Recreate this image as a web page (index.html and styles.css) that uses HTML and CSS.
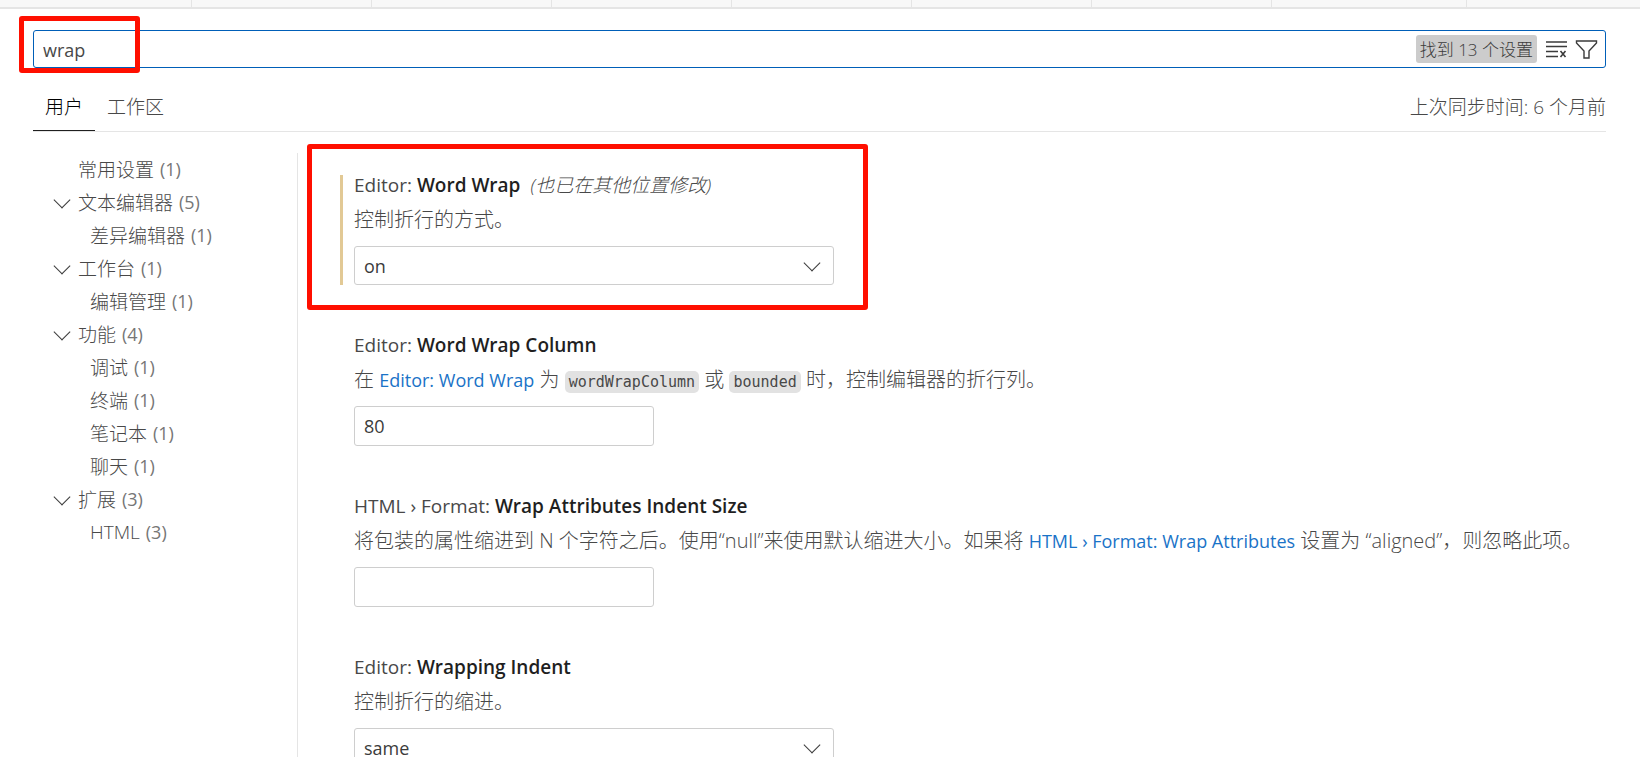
FILE: index.html
```html
<!DOCTYPE html>
<html lang="zh-CN">
<head>
    <meta charset="UTF-8">
    <meta name="viewport" content="width=device-width, initial-scale=1.0">
    <title>设置</title>
    <link rel="stylesheet" href="styles.css">
</head>
<body>
    <!-- Bottom edge of the editor tabs -->
    <div class="tab-strip">
        <span class="tab first"></span>
        <span class="tab"></span>
        <span class="tab"></span>
        <span class="tab"></span>
        <span class="tab"></span>
        <span class="tab"></span>
        <span class="tab"></span>
        <span class="tab wide"></span>
    </div>

    <div class="settings">
        <!-- Search box -->
        <div class="search-box">
            <input type="text" class="search-input" value="wrap" aria-label="搜索设置">
            <span class="count-badge">找到 13 个设置</span>
            <button class="icon-btn" aria-label="清除">
                <svg width="24" height="24" viewBox="0 0 24 24" fill="none" stroke="#3b3b3b">
                    <path d="M2 5h21M2 9.500h21M2 14.500h12M2 19.500h12" stroke-width="1.4"/>
                    <path d="M16.500 14l5 6M21.500 14l-5 6" stroke-width="1.6"/>
                </svg>
            </button>
            <button class="icon-btn" aria-label="筛选">
                <svg width="24" height="24" viewBox="0 0 24 24" fill="none" stroke="#3b3b3b" stroke-width="1.4">
                    <path d="M2.500 4h20v2l-7.500 8v7h-5v-7L2.500 6z"/>
                </svg>
            </button>
            <div class="mark mark-search"></div>
        </div>

        <!-- User / workspace tabs -->
        <div class="scope-bar">
            <button class="scope active">用户</button>
            <button class="scope">工作区</button>
            <span class="sync-time">上次同步时间: 6 个月前</span>
        </div>

        <div class="settings-body">
            <!-- Table of contents -->
            <ul class="toc">
                <li><span class="arrow"></span>常用设置 <span class="count">(1)</span></li>
                <li><span class="arrow open"></span>文本编辑器 <span class="count">(5)</span></li>
                <li class="child">差异编辑器 <span class="count">(1)</span></li>
                <li><span class="arrow open"></span>工作台 <span class="count">(1)</span></li>
                <li class="child">编辑管理 <span class="count">(1)</span></li>
                <li><span class="arrow open"></span>功能 <span class="count">(4)</span></li>
                <li class="child">调试 <span class="count">(1)</span></li>
                <li class="child">终端 <span class="count">(1)</span></li>
                <li class="child">笔记本 <span class="count">(1)</span></li>
                <li class="child">聊天 <span class="count">(1)</span></li>
                <li><span class="arrow open"></span>扩展 <span class="count">(3)</span></li>
                <li class="child">HTML <span class="count">(3)</span></li>
            </ul>

            <!-- Settings list -->
            <div class="setting-list">
                <div class="setting">
                    <div class="setting-inner modified">
                        <div class="title"><label for="wordWrap">Editor: <b>Word Wrap</b></label><i class="note">(也已在其他位置修改)</i></div>
                        <p class="desc">控制折行的方式。</p>
                        <div class="select-wrap">
                            <select id="wordWrap">
                                <option>off</option>
                                <option selected>on</option>
                                <option>wordWrapColumn</option>
                                <option>bounded</option>
                            </select>
                        </div>
                    </div>
                    <div class="mark mark-setting"></div>
                </div>

                <div class="setting">
                    <div class="setting-inner">
                        <div class="title"><label for="wrapColumn">Editor: <b>Word Wrap Column</b></label></div>
                        <p class="desc">在 <a href="#wordWrap">Editor: Word Wrap</a> 为 <code>wordWrapColumn</code> 或 <code>bounded</code> 时，控制编辑器的折行列。</p>
                        <input type="text" class="text-input" id="wrapColumn" value="80">
                    </div>
                </div>

                <div class="setting">
                    <div class="setting-inner">
                        <div class="title"><label for="indentSize">HTML › Format: <b>Wrap Attributes Indent Size</b></label></div>
                        <p class="desc">将包装的属性缩进到 N 个字符之后。使用“null”来使用默认缩进大小。如果将 <a href="#wrapAttributes">HTML › Format: Wrap Attributes</a> 设置为 “aligned”，则忽略此项。</p>
                        <input type="text" class="text-input" id="indentSize">
                    </div>
                </div>

                <div class="setting">
                    <div class="setting-inner">
                        <div class="title"><label for="wrapIndent">Editor: <b>Wrapping Indent</b></label></div>
                        <p class="desc">控制折行的缩进。</p>
                        <div class="select-wrap">
                            <select id="wrapIndent">
                                <option>none</option>
                                <option selected>same</option>
                                <option>indent</option>
                                <option>deepIndent</option>
                            </select>
                        </div>
                    </div>
                </div>
            </div>
        </div>
    </div>
</body>
</html>
```

FILE: styles.css
```css
* {
    margin: 0;
    padding: 0;
    box-sizing: border-box;
}

body {
    display: flex;
    flex-direction: column;
    height: 100vh;
    overflow: hidden;
    background-color: #fff;
    color: #484848;
    font-family: "Open Sans", "Noto Sans CJK SC", sans-serif;
    font-size: 19px;
    font-weight: 300;
}

button, input, select {
    font: inherit;
    color: inherit;
    background: none;
    border: none;
    outline: none;
}

/* Editor tabs */
.tab-strip {
    display: flex;
    flex-shrink: 0;
    height: 9px;
    background-color: #f8f8f8;
    border-bottom: 2px solid #e5e5e5;
}

.tab {
    width: 180px;
    border-right: 1px solid #e5e5e5;
}

.tab.first {
    width: 192px;
}

.tab.wide {
    width: 195px;
}

.settings {
    display: flex;
    flex-direction: column;
    flex: 1;
    min-height: 0;
    padding: 21px 34px 0 33px;
}

/* Search */
.search-box {
    position: relative;
    display: flex;
    flex-shrink: 0;
    align-items: center;
    height: 38px;
    padding-right: 7px;
    border: 1px solid #005fb8;
    border-radius: 3px;
}

.search-input {
    flex: 1;
    min-width: 0;
    height: 36px;
    padding: 2px 9px 0;
    font-size: 18px;
    font-weight: 400;
}

.count-badge {
    height: 28px;
    margin-right: 7px;
    padding: 0 4px;
    background-color: #ccc;
    border-radius: 3px;
    color: #3b3b3b;
    font-size: 17px;
    line-height: 29px;
}

.icon-btn {
    display: flex;
    width: 24px;
    height: 24px;
    margin-left: 6px;
    cursor: pointer;
}

.count-badge + .icon-btn {
    margin-left: 0;
}

/* Scope tabs */
.scope-bar {
    display: flex;
    flex-shrink: 0;
    align-items: flex-end;
    height: 64px;
    border-bottom: 1px solid #e5e5e5;
}

.scope {
    height: 47px;
    padding: 0 12px 2px;
    border-bottom: 1px solid transparent;
    cursor: pointer;
}

.scope.active {
    color: #000;
    border-bottom-color: #1f1f1f;
}

.sync-time {
    margin-left: auto;
    line-height: 47px;
}

/* Body */
.settings-body {
    display: flex;
    flex: 1;
    min-height: 0;
    padding-top: 21px;
}

.toc {
    flex-shrink: 0;
    width: 265px;
    border-right: 1px solid #e5e5e5;
    list-style: none;
}

.toc li {
    display: flex;
    align-items: center;
    gap: 6px;
    height: 33px;
    padding: 0 0 2px 16px;
}

.toc .child {
    padding-left: 57px;
}

.toc .count {
    color: #767676;
    font-size: 18px;
    font-weight: 400;
}

.arrow {
    width: 23px;
    height: 16px;
}

.arrow.open::before,
.select-wrap::after {
    content: "";
    display: block;
    width: 11px;
    height: 11px;
    border-right: 1px solid #3b3b3b;
    border-bottom: 1px solid #3b3b3b;
    transform: rotate(45deg);
}

.arrow.open::before {
    margin-left: 7px;
}

.setting-list {
    flex: 1;
    min-width: 0;
    padding-left: 42px;
}

.setting {
    position: relative;
    padding: 22px 0 28px;
}

.setting-inner {
    padding-left: 11px;
    border-left: 3px solid transparent;
}

.setting-inner.modified {
    border-left-color: #e2c995;
}

.title {
    height: 21px;
    font-weight: 500;
    line-height: 21px;
}

.title b {
    color: #1f1f1f;
    font-weight: 600;
}

.title .note {
    margin-left: 10px;
    font-weight: 300;
}

.desc {
    height: 28px;
    margin: 10px 0 12px;
    font-size: 20px;
    line-height: 28px;
    white-space: nowrap;
}

.desc a {
    color: #1a73c7;
    font-size: 18px;
    font-weight: 400;
    text-decoration: none;
}

code {
    padding: 2px 4px;
    background-color: #e2e2e2;
    border-radius: 5px;
    font-family: "DejaVu Sans Mono", monospace;
    font-size: 15px;
}

.text-input,
.select-wrap select {
    display: block;
    height: 40px;
    padding: 0 9px;
    border: 1px solid #cecece;
    border-radius: 3px;
    color: #3b3b3b;
    font-size: 18px;
    font-weight: 400;
}

.text-input {
    width: 300px;
}

.select-wrap {
    position: relative;
    width: 480px;
}

.select-wrap select {
    width: 100%;
    height: 39px;
    appearance: none;
}

.select-wrap::after {
    position: absolute;
    top: 11px;
    right: 16px;
    pointer-events: none;
}

/* Red highlight frames */
.mark {
    position: absolute;
    border: 5px solid #ff0f00;
    border-radius: 3px;
    pointer-events: none;
}

.mark-search {
    top: -15px;
    left: -15px;
    width: 121px;
    height: 57px;
}

.mark-setting {
    top: -9px;
    left: -33px;
    width: 561px;
    height: 166px;
}
```
